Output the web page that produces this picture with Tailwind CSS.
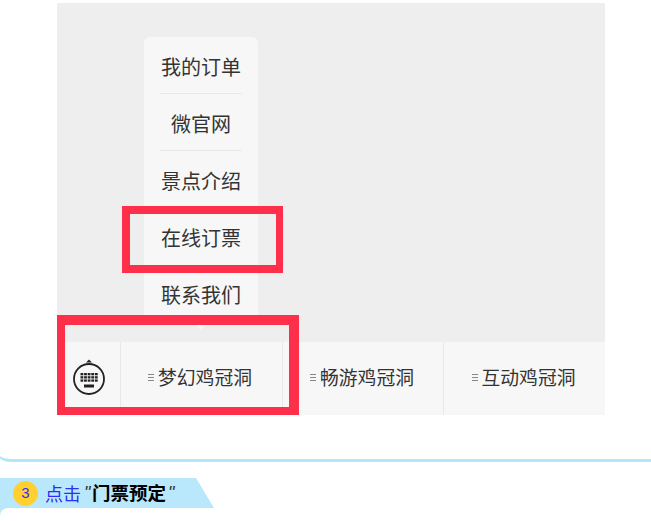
<!DOCTYPE html>
<html lang="zh-CN">
<head>
    <meta charset="UTF-8">
    <meta name="viewport" content="width=device-width, initial-scale=1.0">
    <title>点击门票预定</title>
    <script src="https://cdn.jsdelivr.net/npm/@tailwindcss/browser@4"></script>
</head>
<body class="bg-white overflow-hidden font-['Noto_Sans_CJK_SC','Noto_Sans',sans-serif]">
    <div class="w-[651px] h-[521px] overflow-hidden">
        <!-- phone screenshot -->
        <div class="-ml-[6px] w-[670px] h-[462px] pt-[3px] pl-[63px] border-b-[3px] border-[#b5e6f8] rounded-bl-[16px]">
            <div class="relative w-[548px]">
                <div class="h-[339px] bg-[#eeeeee]"></div>
                <div class="flex h-[73px] bg-[#f7f7f7] text-[18.8px] text-[#333333]">
                    <div class="w-[64px] flex items-center justify-center border-r border-[#e8e8e8]">
                        <svg class="w-[34px] h-[40px] mt-[-3px]" viewBox="0 0 34 40" fill="none">
                            <path d="M14 5.5 L17 2.5 L20 5.5 Z" fill="#222222"/>
                            <circle cx="17" cy="22" r="15" stroke="#222222" stroke-width="1.8"/>
                            <g fill="#222222">
                                <rect x="8.5" y="16" width="2.8" height="2.3"/><rect x="12.1" y="16" width="2.8" height="2.3"/><rect x="15.7" y="16" width="2.8" height="2.3"/><rect x="19.3" y="16" width="2.8" height="2.3"/><rect x="22.9" y="16" width="2.8" height="2.3"/>
                                <rect x="8.5" y="19.2" width="2.8" height="2.3"/><rect x="12.1" y="19.2" width="2.8" height="2.3"/><rect x="15.7" y="19.2" width="2.8" height="2.3"/><rect x="19.3" y="19.2" width="2.8" height="2.3"/><rect x="22.9" y="19.2" width="2.8" height="2.3"/>
                                <rect x="8.5" y="22.4" width="2.8" height="2.3"/><rect x="12.1" y="22.4" width="2.8" height="2.3"/><rect x="15.7" y="22.4" width="2.8" height="2.3"/><rect x="19.3" y="22.4" width="2.8" height="2.3"/><rect x="22.9" y="22.4" width="2.8" height="2.3"/>
                                <rect x="12" y="27.5" width="10" height="3"/>
                            </g>
                        </svg>
                    </div>
                    <div class="w-[162px] pr-[3px] pb-[2px] flex items-center justify-center gap-[4px] border-r border-[#e8e8e8]">
                        <span class="w-[6px] h-[7px] border-y border-[#888888] flex items-center"><span class="block w-full h-px bg-[#888888]"></span></span>
                        <span>梦幻鸡冠洞</span>
                    </div>
                    <div class="w-[161px] pr-[2px] pb-[2px] flex items-center justify-center gap-[4px] border-r border-[#e8e8e8]">
                        <span class="w-[6px] h-[7px] border-y border-[#888888] flex items-center"><span class="block w-full h-px bg-[#888888]"></span></span>
                        <span>畅游鸡冠洞</span>
                    </div>
                    <div class="flex-1 pr-[2px] pb-[2px] flex items-center justify-center gap-[4px]">
                        <span class="w-[6px] h-[7px] border-y border-[#888888] flex items-center"><span class="block w-full h-px bg-[#888888]"></span></span>
                        <span>互动鸡冠洞</span>
                    </div>
                </div>

                <!-- popup menu -->
                <div class="absolute left-[87px] top-[34px] w-[114px] h-[288px] bg-[#f7f7f7] rounded-t-[6px] px-[16px] text-[20px] text-[#333333] text-center">
                    <div class="h-[57px] leading-[60px] border-b border-[#e8e8e8]">我的订单</div>
                    <div class="h-[57px] leading-[60px] border-b border-[#e8e8e8]">微官网</div>
                    <div class="h-[57px] leading-[60px]">景点介绍</div>
                    <div class="h-[57px] leading-[60px]">在线订票</div>
                    <div class="h-[57px] leading-[60px]">联系我们</div>
                    <div class="absolute left-[53px] bottom-[-5px] w-0 h-0 border-x-[4px] border-x-transparent border-t-[5px] border-t-[#f7f7f7]"></div>
                </div>

                <!-- red highlight frames -->
                <div class="absolute left-[65px] top-[203px] w-[161px] h-[67px] border-y-[8px] border-l-[8px] border-r-[7px] border-[#fd2f4b]"></div>
                <div class="absolute left-0 top-[312px] w-[242px] h-[100px] border-t-[10px] border-r-[10px] border-b-[8px] border-l-[8px] border-[#fd2f4b]"></div>
            </div>
        </div>

        <!-- step heading -->
        <div class="mt-[16px] h-[30px] w-[214px] bg-[#b9e8fd] [clip-path:polygon(0_0,196px_0,214px_100%,0_100%)] flex items-center pl-[13px]">
            <span class="w-[25px] h-[25px] rounded-full bg-[#ffd02f] text-[#3a2df0] text-[15px] flex items-center justify-center font-['Liberation_Sans',sans-serif]">3</span>
            <span class="ml-[7px] text-[18px] text-[#2f2cf5]">点击</span>
            <span class="ml-[3px] w-[8px] text-[18px] text-[#333333] italic font-['Liberation_Sans',sans-serif]">"</span>
            <span class="text-[18.5px] font-bold text-black">门票预定</span>
            <span class="ml-[2px] text-[18px] text-[#333333] italic font-['Liberation_Sans',sans-serif]">"</span>
        </div>
        <div class="w-[12px] h-[13px] bg-[#b9e8fd]"><div class="h-full bg-white rounded-tl-[8px]"></div></div>
    </div>
</body>
</html>
